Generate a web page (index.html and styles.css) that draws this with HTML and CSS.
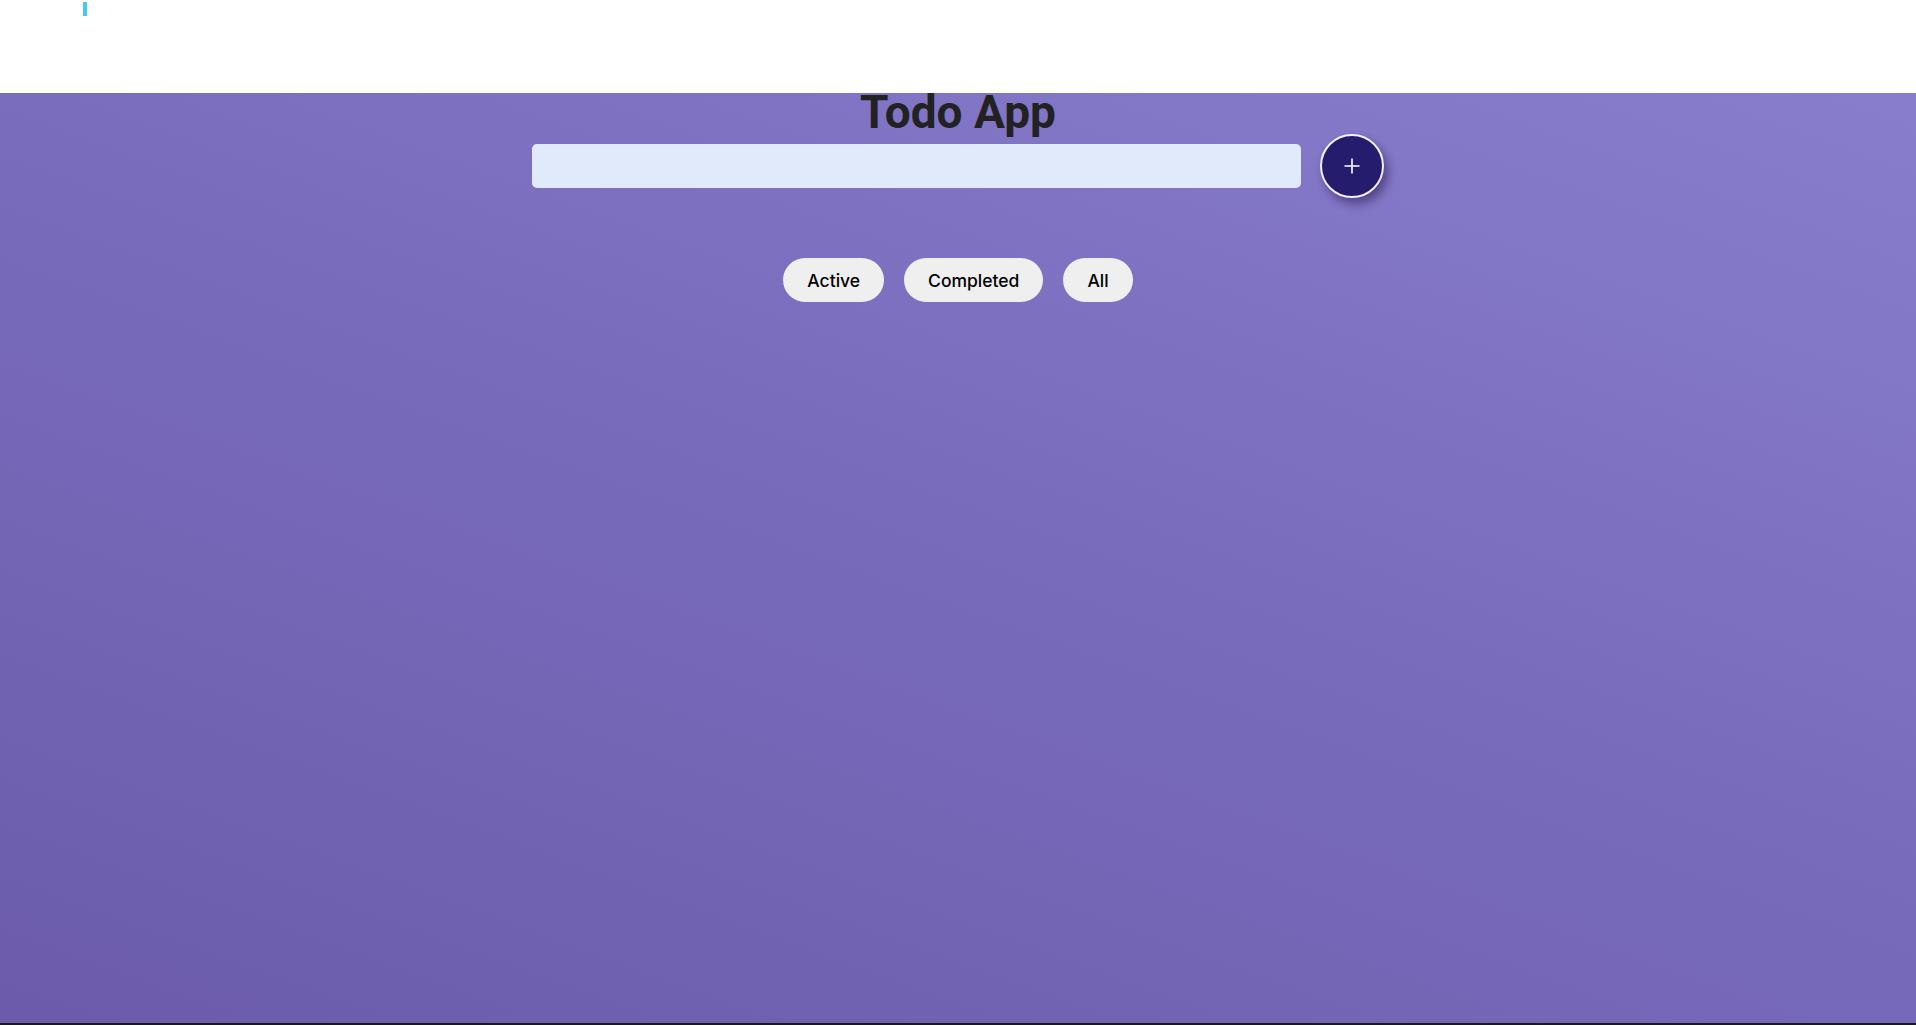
FILE: index.html
```html
<!DOCTYPE html>
<html lang="en">
<head>
<meta charset="utf-8">
<title>Todo App</title>
<link rel="stylesheet" href="styles.css">
</head>
<body>
<header class="topbar"><span class="caret"></span></header>
<main class="app">
  <h1 class="title">Todo App</h1>
  <div class="add-row">
    <input class="todo-input" type="text" aria-label="New todo">
    <button class="add-btn" aria-label="Add">
      <svg width="18" height="18" viewBox="0 0 18 18"><path d="M9 1.5v15M1.5 9h15" stroke="#fff" stroke-width="1.6" fill="none"/></svg>
    </button>
  </div>
  <div class="filters">
    <button class="filter">Active</button>
    <button class="filter">Completed</button>
    <button class="filter">All</button>
  </div>
</main>
</body>
</html>
```
FILE: styles.css
```css
* { box-sizing: border-box; }
html, body { margin: 0; padding: 0; }
body { background: #fff; font-family: "Roboto", "Liberation Sans", sans-serif; }

.topbar {
  height: 93px;
  padding: 2px 0 0 83px;
  background: #fff;
}
.caret {
  display: block;
  width: 4px;
  height: 14px;
  background: #3ecbf5;
}

.app {
  min-height: calc(100vh - 93px);
  background: linear-gradient(200deg, #887dcc 0%, #7a6cbd 45%, #6b5baa 100%);
  border-bottom: 2px solid #1a1a1a;
  display: flex;
  flex-direction: column;
  align-items: center;
}

.title {
  margin: -2px 0 0;
  font-family: "Roboto", "Liberation Sans", sans-serif;
  font-weight: 700;
  font-size: 46px;
  line-height: 43px;
  color: #222;
}

.add-row {
  display: flex;
  align-items: center;
  gap: 19px;
}
.todo-input {
  width: 769px;
  height: 44px;
  border: none;
  border-radius: 5px;
  background: #e1eafb;
  outline: none;
  padding: 0 12px;
  font-size: 16px;
}
.add-btn {
  width: 64px;
  height: 64px;
  border-radius: 50%;
  border: 2px solid #f2f0ff;
  background: #261c6e;
  display: flex;
  align-items: center;
  justify-content: center;
  padding: 0;
  box-shadow: 4px 6px 10px rgba(20, 10, 60, 0.45);
  cursor: pointer;
}

.filters {
  margin-top: 60px;
  display: flex;
  gap: 20px;
}
.filter {
  height: 44px;
  padding: 0 24px;
  border: none;
  border-radius: 22px;
  background: #efefef;
  color: #000;
  font-family: "Inter", "Liberation Sans", sans-serif;
  font-size: 17.5px;
  font-weight: 500;
  cursor: pointer;
}
```
